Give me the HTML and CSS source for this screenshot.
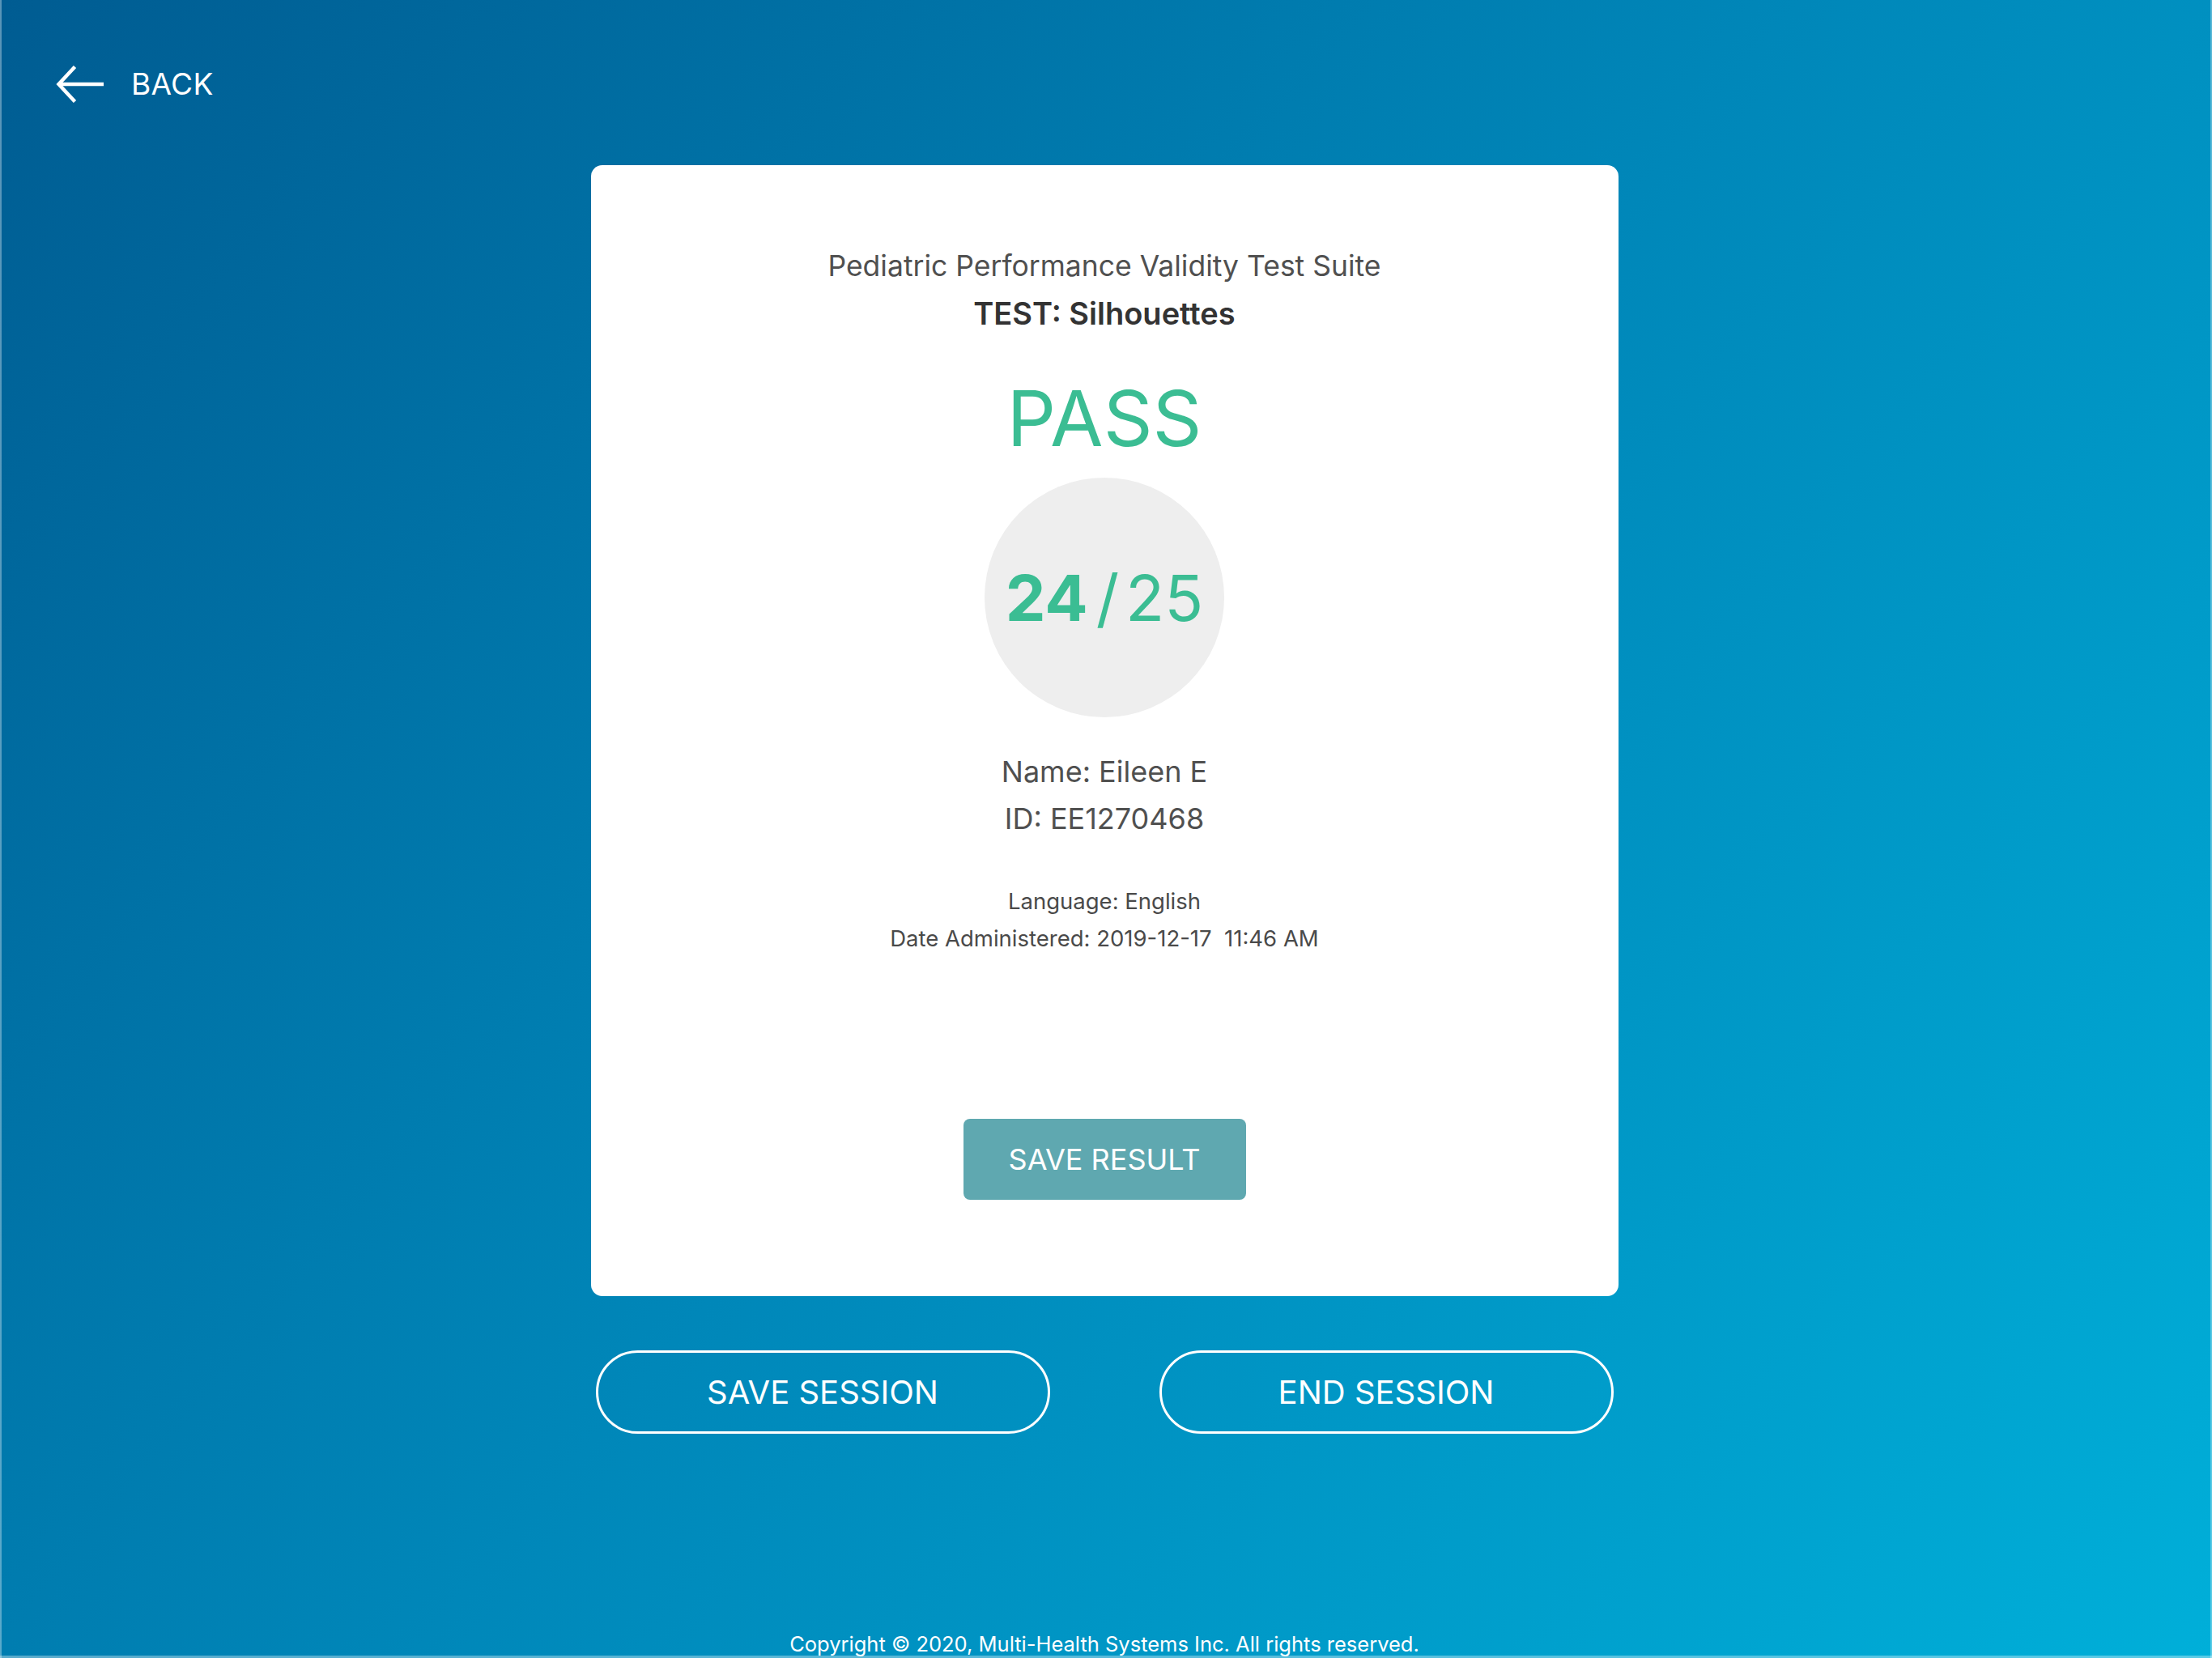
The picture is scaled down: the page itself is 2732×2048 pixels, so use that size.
FILE: index.html
```html
<!DOCTYPE html>
<html lang="en">
<head>
<meta charset="utf-8">
<title>Silhouettes Result</title>
<link rel="stylesheet" href="styles.css">
</head>
<body>
<div class="page">
  <header class="topbar">
    <a class="back" href="#">
      <svg class="back-icon" width="60" height="46" viewBox="0 0 60 46" aria-hidden="true">
        <path d="M3 23 H59" fill="none" stroke="#fff" stroke-width="4.5"/>
        <path d="M23.5 1.5 L3.5 23 L23.5 44.5" fill="none" stroke="#fff" stroke-width="4.5"/>
      </svg>
      <span class="back-label">BACK</span>
    </a>
  </header>

  <main class="card">
    <div class="suite">Pediatric Performance Validity Test Suite</div>
    <div class="test-name">TEST: Silhouettes</div>
    <div class="verdict">PASS</div>
    <div class="score-circle">
      <span class="score-got">24</span><span class="score-slash">/</span><span class="score-total">25</span>
    </div>
    <div class="person">
      <div class="person-line">Name: Eileen E</div>
      <div class="person-line">ID: EE1270468</div>
    </div>
    <div class="meta">
      <div class="meta-line">Language: English</div>
      <div class="meta-line">Date Administered: 2019-12-17&nbsp; 11:46 AM</div>
    </div>
    <button class="save-result" type="button">SAVE RESULT</button>
  </main>

  <div class="session-actions">
    <button class="outline-btn" type="button">SAVE SESSION</button>
    <button class="outline-btn" type="button">END SESSION</button>
  </div>

  <footer class="copyright">Copyright © 2020, Multi-Health Systems Inc. All rights reserved.</footer>
</div>
</body>
</html>
```

FILE: styles.css
```css
* { box-sizing: border-box; }

html, body {
  margin: 0;
  padding: 0;
}

body {
  font-family: "Inter", "Roboto", "Liberation Sans", sans-serif;
  -webkit-font-smoothing: antialiased;
}

.page {
  width: 2732px;
  height: 2048px;
  padding-right: 4px;
  display: flex;
  flex-direction: column;
  align-items: center;
  background: linear-gradient(130deg, #005c92 0%, #0087b9 50%, #00afd9 100%);
  box-shadow: inset 2px 0 0 rgba(255,255,255,0.35), inset -2px 0 0 rgba(255,255,255,0.35), inset 0 -3px 0 rgba(255,255,255,0.35);
  overflow: hidden;
}

.topbar {
  align-self: stretch;
  height: 60px;
  margin-top: 74px;
  padding-left: 69px;
  display: flex;
  align-items: center;
}

.back {
  display: flex;
  align-items: center;
  gap: 33px;
  color: #fff;
  text-decoration: none;
}

.back-icon { display: block; }

.back-label {
  font-size: 37px;
  line-height: 60px;
  letter-spacing: 0.3px;
}

.card {
  margin-top: 70px;
  width: 1269px;
  height: 1397px;
  background: #fff;
  border-radius: 14px;
  padding-top: 96px;
  display: flex;
  flex-direction: column;
  align-items: center;
  text-align: center;
}

.suite {
  font-size: 35.5px;
  line-height: 58px;
  color: #505050;
}

.test-name {
  font-size: 38px;
  line-height: 58px;
  font-weight: 600;
  color: #333;
}

.verdict {
  margin-top: 46px;
  font-size: 95px;
  line-height: 110px;
  color: #3bbd93;
}

.score-circle {
  margin-top: 18px;
  width: 296px;
  height: 296px;
  border-radius: 50%;
  background: #eeeeee;
  display: flex;
  align-items: center;
  justify-content: center;
  color: #3bbd93;
  font-size: 79px;
  line-height: 1;
}

.score-got { font-weight: 700; }

.score-slash {
  margin: 0 8px 0 10px;
}

.person {
  margin-top: 38px;
}

.person-line {
  font-size: 36px;
  line-height: 58px;
  color: #505050;
}

.meta {
  margin-top: 50px;
}

.meta-line {
  font-size: 27.5px;
  line-height: 46px;
  color: #4a4a4a;
}

.save-result {
  margin-top: 200px;
  width: 349px;
  height: 100px;
  border: none;
  border-radius: 8px;
  background: #5fa8b0;
  color: #fff;
  font-family: inherit;
  font-size: 36px;
  padding: 0;
}

.session-actions {
  margin-top: 67px;
  width: 1257px;
  display: flex;
  justify-content: space-between;
}

.outline-btn {
  width: 561px;
  height: 103px;
  border: 3px solid #fff;
  border-radius: 52px;
  background: transparent;
  color: #fff;
  font-family: inherit;
  font-size: 40px;
  padding: 0;
}

.copyright {
  margin-top: auto;
  font-size: 25.5px;
  line-height: 34px;
  color: #fff;
}
```
